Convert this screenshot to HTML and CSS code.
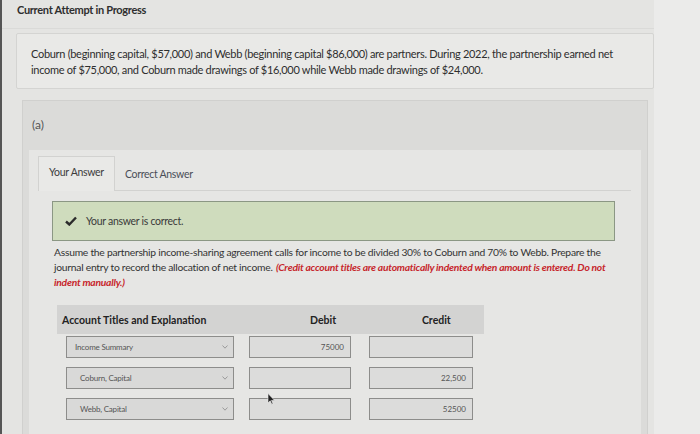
FILE: index.html
```html
<!DOCTYPE html>
<html lang="en">
<head>
    <meta charset="UTF-8">
    <meta name="viewport" content="width=device-width, initial-scale=1.0">
    <title>Current Attempt in Progress</title>
    <link rel="stylesheet" href="styles.css">
</head>
<body>
    <div class="page">
        <div class="title">Current Attempt in Progress</div>
        <div class="question">
            Coburn (beginning capital, $57,000) and Webb (beginning capital $86,000) are partners. During 2022, the partnership earned net
            income of $75,000, and Coburn made drawings of $16,000 while Webb made drawings of $24,000.
        </div>
        <div class="part">
            <div class="part-head">(a)</div>
            <div class="panel">
                <div class="tabs">
                    <div class="tab active">Your Answer</div>
                    <div class="tab">Correct Answer</div>
                </div>
                <div class="correct">
                    <svg class="check" width="12" height="10" viewBox="0 0 12 10"><path d="M1 5.5 L4.3 8.5 L11 1.5" fill="none" stroke="#2b2b2b" stroke-width="2.4"/></svg>
                    <span>Your answer is correct.</span>
                </div>
                <p class="prompt">
                    Assume the partnership income-sharing agreement calls for income to be divided 30% to Coburn and 70% to Webb. Prepare the
                    journal entry to record the allocation of net income. <em class="note">(Credit account titles are automatically indented when amount is entered. Do not indent manually.)</em>
                </p>
                <div class="journal">
                    <div class="jhead">
                        <div class="col-acc">Account Titles and Explanation</div>
                        <div class="col-num">Debit</div>
                        <div class="col-num">Credit</div>
                    </div>
                    <div class="jrow">
                        <div class="select">Income Summary<svg class="caret" width="6" height="4" viewBox="0 0 6 4"><path d="M0.5 0.5 L3 3.2 L5.5 0.5" fill="none" stroke="#9a9a9a" stroke-width="1"/></svg></div>
                        <div class="field">75000</div>
                        <div class="field"></div>
                    </div>
                    <div class="jrow">
                        <div class="select indent">Coburn, Capital<svg class="caret" width="6" height="4" viewBox="0 0 6 4"><path d="M0.5 0.5 L3 3.2 L5.5 0.5" fill="none" stroke="#9a9a9a" stroke-width="1"/></svg></div>
                        <div class="field"></div>
                        <div class="field">22,500</div>
                    </div>
                    <div class="jrow">
                        <div class="select indent">Webb, Capital<svg class="caret" width="6" height="4" viewBox="0 0 6 4"><path d="M0.5 0.5 L3 3.2 L5.5 0.5" fill="none" stroke="#9a9a9a" stroke-width="1"/></svg></div>
                        <div class="field"><svg class="cursor" width="8" height="12" viewBox="0 0 8 12"><path d="M1 0.5 L1 10 L3.2 7.8 L4.8 11.2 L6 10.6 L4.5 7.4 L7.4 7.2 Z" fill="#222" stroke="#eee" stroke-width="0.6"/></svg></div>
                        <div class="field">52500</div>
                    </div>
                </div>
            </div>
        </div>
    </div>
</body>
</html>
```
FILE: styles.css
```css
body{
    margin: 0;
    background-color: #ebebea;
    font-family: Lato, "Open Sans", sans-serif;
    color: #2e2e2e;
    border-left: 2px solid #555;
    height: 434px;
    overflow: hidden;
    box-sizing: border-box;
}
.page{
    width: 652px;
    height: 100%;
    background-color: #e4e4e2;
}
.title{
    padding: 3px 0 0 15px;
    height: 25px;
    font-size: 11px;
    font-weight: bold;
    letter-spacing: -0.3px;
    border-bottom: 1px solid #dadad8;
}
.question{
    margin: 4px 0 0 14px;
    padding: 12px 14px 10px 14px;
    background-color: #e9e9e7;
    border: 1px solid #d4d4d2;
    border-radius: 2px;
    font-size: 11px;
    line-height: 16px;
    letter-spacing: -0.3px;
}
.part{
    margin: 11px 6px 0 20px;
    background-color: #dbdbd9;
    border: 1px solid #d0d0ce;
    height: 340px;
}
.part-head{
    padding: 17px 9px 0 9px;
    height: 32px;
    font-size: 12px;
    line-height: 14px;
    color: #555;
}
.panel{
    margin: 0 6px 0 6px;
    padding: 6px 0 0 9px;
    background-color: #e6e6e4;
    height: 300px;
}
.tabs{
    display: flex;
    border-bottom: 1px solid #d2d2d0;
    margin-right: 10px;
}
.tab{
    padding: 9px 10px 12px 10px;
    font-size: 10.5px;
    line-height: 13px;
    letter-spacing: -0.3px;
    color: #3c3c3c;
}
.tab.active{
    border: 1px solid #d2d2d0;
    border-bottom: none;
    background-color: #e9e9e7;
    margin-bottom: -1px;
}
.tab + .tab{
    padding-top: 12px;
    padding-bottom: 8px;
    color: #4a4e58;
}
.correct{
    display: flex;
    align-items: center;
    gap: 9px;
    margin: 10px 26px 0 14px;
    padding: 0 0 0 12px;
    height: 38px;
    background-color: #cfdcbd;
    border: 1px solid #8b9784;
    font-size: 10.5px;
    letter-spacing: -0.3px;
    color: #3a3a3a;
}
.prompt{
    margin: 4px 28px 0 16px;
    font-size: 10.3px;
    line-height: 15px;
    letter-spacing: -0.25px;
    color: #333;
}
.note{
    margin-left: 1px;
    color: #c6262c;
    font-weight: bold;
}
.journal{
    margin: 15px 0 0 19px;
    width: 427px;
}
.jhead{
    display: flex;
    align-items: center;
    height: 29px;
    background-color: #d3d3d2;
    font-size: 10.5px;
    font-weight: bold;
    color: #222;
}
.col-acc{
    width: 224px;
    padding-left: 5px;
}
.col-num{
    width: 100px;
    text-align: center;
}
.col-num + .col-num{
    padding-left: 18px;
}
.jrow{
    display: flex;
    align-items: center;
    gap: 15px;
    margin-top: 2px;
    padding-left: 9px;
}
.jrow + .jrow{
    margin-top: 9px;
}
.select{
    display: flex;
    align-items: center;
    justify-content: space-between;
    width: 168px;
    height: 22px;
    padding: 0 5px 0 8px;
    box-sizing: border-box;
    background-color: #d9d9d8;
    border: 1px solid #8d8d8b;
    font-size: 8px;
    color: #555;
    letter-spacing: -0.2px;
}
.select.indent{
    padding-left: 13px;
}
.field{
    position: relative;
    width: 102px;
    height: 22px;
    padding-right: 6px;
    box-sizing: border-box;
    background-color: #dcdcdb;
    border: 1px solid #8d8d8b;
    font-size: 8px;
    line-height: 20px;
    text-align: right;
    color: #555;
}
.field + .field{
    width: 104px;
    margin-left: 3px;
}
.cursor{
    position: absolute;
    left: 17px;
    top: -6px;
}
```
